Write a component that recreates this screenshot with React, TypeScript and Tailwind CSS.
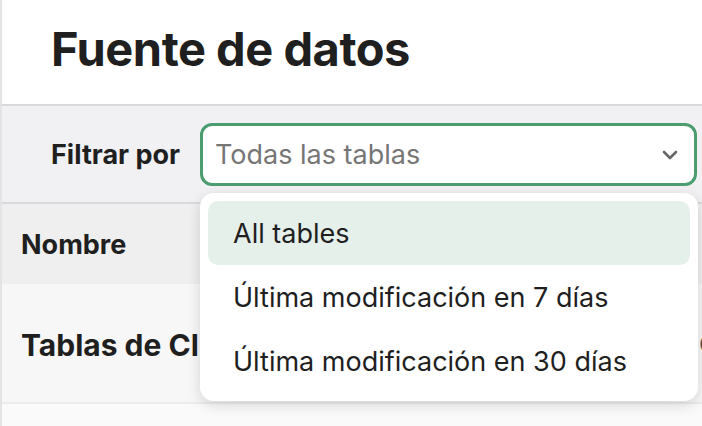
import { ChevronDown } from "lucide-react";

const options = ["All tables", "Última modificación en 7 días", "Última modificación en 30 días"];

export default function App() {
  return (
    <div
      className="relative h-[426px] w-[702px] overflow-hidden border-l-2 border-[#e4e4e6] bg-white text-[#1f1f1f]"
      style={{ fontFamily: "Inter, 'Noto Sans', sans-serif" }}
    >
      <header className="flex h-[104px] items-center pl-[49px] pb-[7px]">
        <h1 className="text-[47px] font-bold tracking-[-0.01em] leading-none">Fuente de datos</h1>
      </header>

      <div className="flex h-[100px] items-center gap-[20px] border-y-2 border-[#d9d9db] bg-[#f1f1f3] pl-[49px]">
        <span className="text-[27px] font-bold leading-none">Filtrar por</span>
        <div className="relative">
          <div className="flex h-[63px] w-[497px] items-center justify-between rounded-[12px] border-[3px] border-[#4b9d70] bg-white pl-[12px] pr-[12px] pt-[2px]">
            <span className="text-[27px] text-[#767676]">Todas las tablas</span>
            <ChevronDown className="h-[24px] w-[24px] text-[#666]" strokeWidth={2.6} />
          </div>

          <div className="absolute left-0 top-[70px] z-10 w-[498px] rounded-[14px] bg-white p-[8px] shadow-[0_4px_14px_rgba(0,0,0,0.14)]">
            {options.map((opt, i) => (
              <div
                key={opt}
                className={
                  "flex h-[64px] items-center rounded-[10px] px-[25px] pt-[4px] text-[27px] text-[#1f1f1f] " +
                  (i === 0 ? "bg-[#e6f0ea]" : "")
                }
              >
                {opt}
              </div>
            ))}
          </div>
        </div>
      </div>

      <div className="rounded-tl-[14px]">
        <div className="flex h-[80px] items-center bg-[#efefef] pl-[19px]">
          <span className="text-[27px] font-bold leading-none">Nombre</span>
        </div>
        <div className="flex h-[120px] items-center border-b-2 border-[#ececec] bg-[#f7f7f7] pl-[19px] pt-[4px]">
          <span className="w-[678px] shrink-0 text-[30px] font-bold leading-none">Tablas de Clientes</span>
          <span className="text-[24px] text-[#555]">Chat</span>
        </div>
        <div className="h-[40px] bg-[#fafafa]" />
      </div>
    </div>
  );
}
